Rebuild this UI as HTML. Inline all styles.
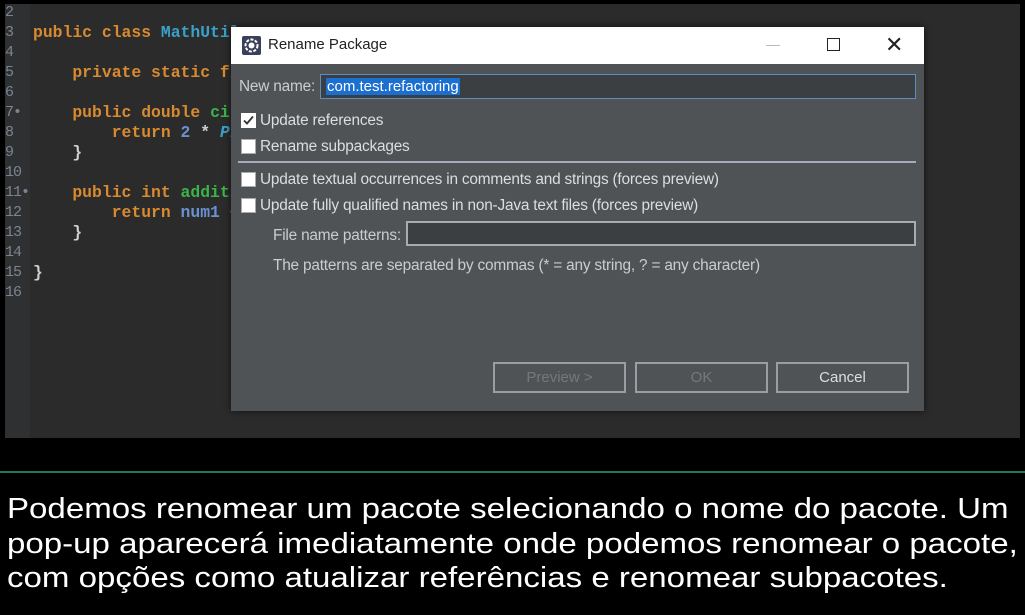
<!DOCTYPE html>
<html><head><meta charset="utf-8"><style>
*{margin:0;padding:0;box-sizing:border-box}
body{width:1025px;height:615px;background:#000;position:relative;overflow:hidden;font-family:"Liberation Sans",sans-serif}
#ed{position:absolute;left:5px;top:4px;width:1015px;height:434px;background:#2b2b2b}
#gut{position:absolute;left:5px;top:4px;width:25px;height:434px;background:#2f3031}
.ln{position:absolute;left:5px;font:15px "Liberation Mono",monospace;color:#7a8590;letter-spacing:-1px}
.cd{position:absolute;left:33px;font:bold 16.4px "Liberation Mono",monospace;color:#d88a30;white-space:pre}
.b{color:#3aa0c8}.g{color:#3cb34a}.w{color:#cfcfcf}.n{color:#6a90d0}
#dlg{position:absolute;left:231px;top:27px;width:693px;height:384px;background:#505356;box-shadow:0 0 6px #111}
#tb{height:37px;background:#fff;position:relative;font-size:15px;color:#222}
.t{position:absolute;font-size:15.4px;color:#ddd;white-space:nowrap;letter-spacing:-0.2px}
.cb{position:absolute;left:10px;width:15px;height:15px;background:#fff;border:1px solid #aaa}
.inp{position:absolute;background:#3c3f41;border:1px solid #9aa2aa}
.btn{position:absolute;top:335px;width:133px;height:31px;border:2px solid #9a9ea2;text-align:center;line-height:27px;font-size:15px;color:#777}
#cap{position:absolute;left:7px;top:492px;font-size:29px;line-height:34.5px;color:#fff;white-space:nowrap;transform:scaleX(1.14);transform-origin:0 0}
</style></head><body>
<div id="ed"></div><div id="gut"></div>
<div class="ln" style="top:4px">2</div>
<div class="ln" style="top:24px">3</div>
<div class="ln" style="top:44px">4</div>
<div class="ln" style="top:64px">5</div>
<div class="ln" style="top:84px">6</div>
<div class="ln" style="top:104px">7•</div>
<div class="ln" style="top:124px">8</div>
<div class="ln" style="top:144px">9</div>
<div class="ln" style="top:164px">10</div>
<div class="ln" style="top:184px">11•</div>
<div class="ln" style="top:204px">12</div>
<div class="ln" style="top:224px">13</div>
<div class="ln" style="top:244px">14</div>
<div class="ln" style="top:264px">15</div>
<div class="ln" style="top:284px">16</div>
<div class="cd" style="top:23px">public class <span class="b">MathUtil</span></div>
<div class="cd" style="top:63px">    private static fi</div>
<div class="cd" style="top:103px">    public double <span class="g">cir</span></div>
<div class="cd" style="top:123px">        return <span class="n">2</span> <span class="w">*</span> <span class="b"><i>PI</i></span></div>
<div class="cd" style="top:143px"><span class="w">    }</span></div>
<div class="cd" style="top:183px">    public int <span class="g">additi</span></div>
<div class="cd" style="top:203px">        return <span class="n">num1</span> <span class="w">+</span></div>
<div class="cd" style="top:223px"><span class="w">    }</span></div>
<div class="cd" style="top:263px"><span class="w">}</span></div>

<div id="dlg">
<div id="tb">
<svg style="position:absolute;left:11px;top:9px" width="19" height="19" viewBox="0 0 19 19"><rect width="19" height="19" rx="2" fill="#3a3f5a"/><circle cx="9.5" cy="9.5" r="6" fill="none" stroke="#fff" stroke-width="2" stroke-dasharray="3 1.5"/><circle cx="9.5" cy="9.5" r="3" fill="#fff"/></svg>
<span style="position:absolute;left:37px;top:9px">Rename Package</span>
<span style="position:absolute;left:535px;top:18px;width:14px;height:1px;background:#bbb"></span>
<span style="position:absolute;left:596px;top:11px;width:13px;height:13px;border:1.5px solid #222"></span>
<span style="position:absolute;left:654px;top:5px;font-size:22px;color:#222">✕</span>
</div>
<div class="t" style="left:8px;top:51px;color:#ccc">New name:</div>
<div class="inp" style="left:89px;top:47px;width:596px;height:25px;border-color:#5a8fc0"><span style="position:absolute;left:5px;top:3px;background:#1a6fd0;color:#fff;font-size:15px;padding:0 1px">com.test.refactoring</span></div>
<div class="cb" style="top:86px;border:none;background:#fff"><svg width="15" height="15"><path d="M3 7.5l3 3 6-7" stroke="#333" stroke-width="1.8" fill="none"/></svg></div>
<div class="t" style="left:29px;top:85px">Update references</div>
<div class="cb" style="top:112px"></div>
<div class="t" style="left:29px;top:111px">Rename subpackages</div>
<div style="position:absolute;left:7px;top:134px;width:678px;height:2px;background:#aab"></div>
<div class="cb" style="top:145px"></div>
<div class="t" style="left:29px;top:144px">Update textual occurrences in comments and strings (forces preview)</div>
<div class="cb" style="top:171px"></div>
<div class="t" style="left:29px;top:170px">Update fully qualified names in non-Java text files (forces preview)</div>
<div class="t" style="left:42px;top:200px;color:#ccc">File name patterns:</div>
<div class="inp" style="left:175px;top:194px;width:510px;height:25px;border:2px solid #a8acb0"></div>
<div class="t" style="left:42px;top:230px;color:#ccc">The patterns are separated by commas (* = any string, ? = any character)</div>
<div class="btn" style="left:262px">Preview &gt;</div>
<div class="btn" style="left:404px">OK</div>
<div class="btn" style="left:545px;color:#ddd">Cancel</div>
</div>
<div style="position:absolute;left:0;top:471px;width:1025px;height:2px;background:#1f7a5a"></div>
<div id="cap">Podemos renomear um pacote selecionando o nome do pacote. Um<br>pop-up aparecerá imediatamente onde podemos renomear o pacote,<br>com opções como atualizar referências e renomear subpacotes.</div>
</body></html>
